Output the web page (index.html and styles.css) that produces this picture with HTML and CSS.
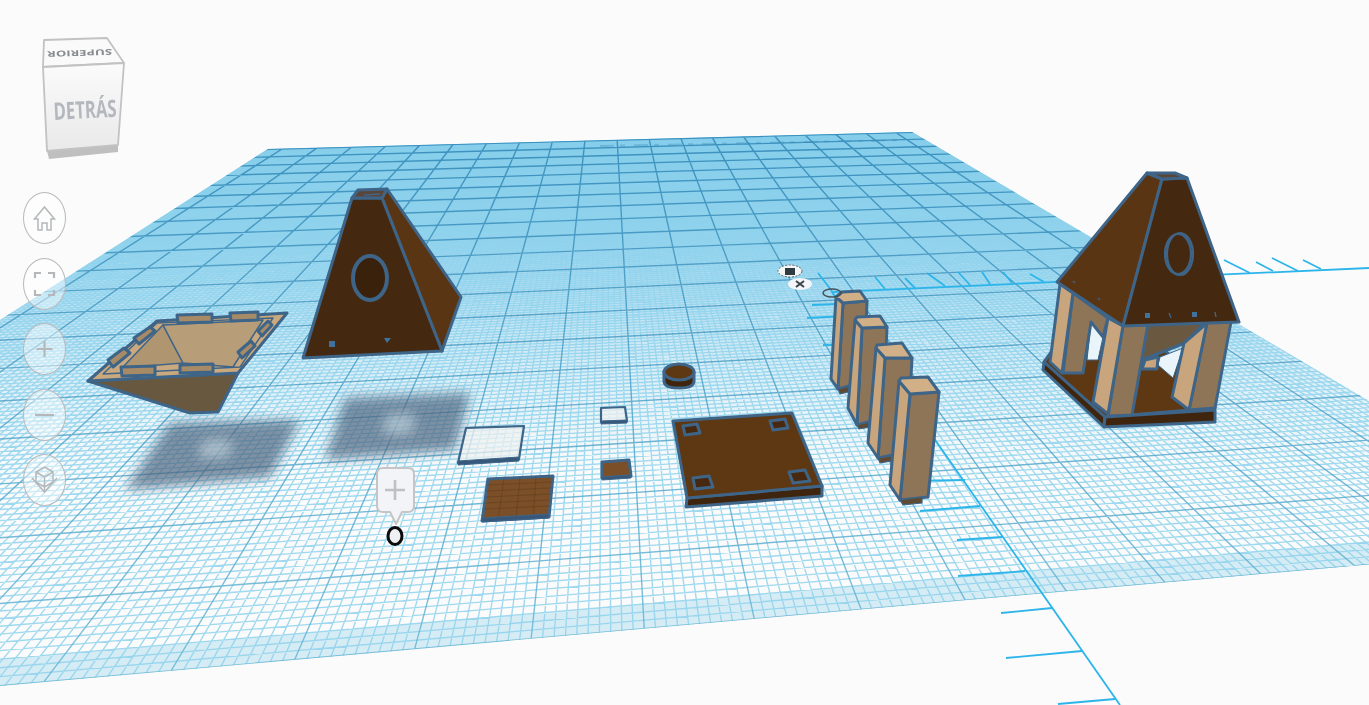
FILE: index.html
```html
<!DOCTYPE html>
<html lang="es">
<head>
<meta charset="utf-8">
<title>Tinkercad</title>
<link rel="stylesheet" href="styles.css">
</head>
<body>
<main class="editor">
<svg class="scene" viewBox="0 0 1369 705" width="1369" height="705" xmlns="http://www.w3.org/2000/svg">
  <defs>
    <linearGradient id="plateTint" gradientUnits="userSpaceOnUse" x1="0" y1="132" x2="0" y2="480">
      <stop offset="0" stop-color="#3fa9dd" stop-opacity=".9"/>
      <stop offset=".45" stop-color="#6fc2e9" stop-opacity=".5"/>
      <stop offset="1" stop-color="#a8def2" stop-opacity="0"/>
    </linearGradient>
    <linearGradient id="majorFade" gradientUnits="userSpaceOnUse" x1="0" y1="132" x2="0" y2="680">
      <stop offset="0" stop-color="#2f86b6"/>
      <stop offset=".45" stop-color="#4ea2c8"/>
      <stop offset="1" stop-color="#6ab8d6"/>
    </linearGradient>
    <linearGradient id="cubeFace" x1="0" y1="0" x2="0" y2="1">
      <stop offset="0" stop-color="#fbfbfb"/>
      <stop offset="1" stop-color="#e9e9e9"/>
    </linearGradient>
    <filter id="soft" x="-30%" y="-30%" width="160%" height="160%"><feGaussianBlur stdDeviation="6"/></filter>
    <clipPath id="plateClip"><path d="M268 149L912 132L1611 543L-666 745Z"/></clipPath>
  </defs>

  <!-- work plane: filled in by grid.js -->
  <g id="plate" clip-path="url(#plateClip)"></g>
  <path class="plate-smudge" d="M600 146L905 140"/>

  <!-- rulers -->
  <g class="ruler">
    <path d="M1120 705L832 292L1369 268"/>
    <path d="M1224 260L1250 273M1256 262L1273 271M1272 258L1298 271M1303 260L1321 269"/>
    <path d="M818 273L832 291M875 277L885 289M905 278L915 288M927 273L945 286M958 272L970 285M982 272L990 284M1003 272L1012 283M1030 274L1044 282"/>
    <path d="M812 305L838 304M807 318L847 316M823 345L857 344M910 481L965 480M920 511L980 506M957 540L1002 537M958 576L1025 571M1001 613L1052 608M1006 658L1082 651M1058 704L1115 699"/>
  </g>

  <!-- shadows of the floating shapes -->
  <g class="shadow" filter="url(#soft)">
    <path d="M170 423L300 420L270 477L125 490Z"/>
    <path d="M345 398L470 393L455 450L325 460Z"/>
    <path class="shadow-gap" d="M205 442L232 441L226 456L200 457Z"/>
    <path class="shadow-gap" d="M388 416L414 415L410 432L384 433Z"/>
  </g>

  <!-- tray -->
  <g class="edge">
    <path class="under" d="M88 381L238 373L218 412L190 413Z"/>
    <path class="rim" d="M88 381L157 321L287 313L238 373Z"/>
    <path class="inner-left" d="M122 368L163 325L183 363Z"/>
    <path class="inner-back" d="M163 325L263 320L233 367L183 363Z"/>
    <path class="thin" d="M103 374L157 323L273 318L240 367Z"/>
    <path class="tab" d="M177 315L212 314L212 322L178 323Z"/>
    <path class="tab" d="M230 313L258 312L258 320L231 321Z"/>
    <path class="tab" d="M134 338L150 327L155 331L139 344Z"/>
    <path class="tab" d="M108 360L124 348L130 353L113 367Z"/>
    <path class="tab" d="M258 331L268 321L272 325L262 336Z"/>
    <path class="tab" d="M238 352L251 341L255 346L242 358Z"/>
    <path class="tab" d="M121 367L155 366L155 375L122 376Z"/>
    <path class="tab" d="M180 365L213 364L213 372L180 373Z"/>
  </g>

  <!-- pyramid -->
  <g class="edge">
    <path class="roof-light" d="M387 189L461 297L442 351L382 198Z"/>
    <path class="roof-dark" d="M352 198L382 198L442 351L303 358Z"/>
    <path class="rim-dark" d="M352 198L358 190L387 189L382 198Z"/>
    <path class="thin" d="M364 195L380 194"/>
    <ellipse class="hole" cx="370" cy="278" rx="17" ry="22"/>
    <rect class="mark" x="329" y="341" width="6" height="6"/>
    <path class="mark" d="M384 338H391L387 343Z"/>
  </g>

  <!-- thin plates -->
  <g class="edge">
    <path class="sheet" d="M466 428L524 426L519 459L458 463Z"/>
    <path class="strip" d="M458 461L519 457L519 461L458 465Z"/>
    <path class="panel" d="M488 479L553 476L549 517L482 521Z"/>
    <path class="panel-lines" d="M487 485L552 482M486 491L551 488M486 497L551 494M485 503L550 500M484 509L550 506M504 479L498 520M520 478L516 519M536 477L533 518"/>
    <path class="strip" d="M482 518L549 514L549 518L482 522Z"/>
    <path class="sheet" d="M601 408L625 407L627 421L601 422Z"/>
    <path class="strip" d="M601 421L627 420L627 423L601 424Z"/>
    <path class="panel" d="M602 462L629 460L631 476L602 478Z"/>
    <path class="strip" d="M602 477L631 475L631 478L602 480Z"/>
  </g>

  <!-- disc -->
  <g class="edge">
    <path class="base-front" d="M664 372V381C664 386 671 388 679 388C687 388 694 386 694 381V372Z"/>
    <ellipse class="base-top" cx="679" cy="372" rx="15" ry="8"/>
  </g>

  <!-- base plate -->
  <g class="edge">
    <path class="base-front" d="M687 498L822 486L822 496L686 507Z"/>
    <path class="base-top" d="M673 421L792 413L822 486L687 498Z"/>
    <path class="slot" d="M683 426L697 424L700 433L685 435Z"/>
    <path class="slot" d="M770 421L785 419L788 428L773 430Z"/>
    <path class="slot" d="M693 478L709 476L713 487L695 489Z"/>
    <path class="slot" d="M789 472L805 470L810 481L793 483Z"/>
  </g>

  <!-- pillars -->
  <g class="edge">
    <path class="pillar-side" d="M843 303L867 301L864 382L838 389Z"/>
    <path class="pillar-front" d="M836 297L843 303L838 389L831 379Z"/>
    <path class="pillar-cap" d="M836 297L842 292L860 291L867 301L843 303Z"/>
    <path class="foot" d="M838 389L852 386V391L840 394Z"/>
    <path class="pillar-side" d="M862 328L887 327L883 418L857 425Z"/>
    <path class="pillar-front" d="M855 320L862 328L857 425L848 408Z"/>
    <path class="pillar-cap" d="M855 320L857 317L880 316L887 327L862 328Z"/>
    <path class="foot" d="M857 425L870 422V427L859 429Z"/>
    <path class="pillar-side" d="M885 358L912 358L907 452L878 458Z"/>
    <path class="pillar-front" d="M876 348L885 358L878 458L868 443Z"/>
    <path class="pillar-cap" d="M876 348L877 345L902 343L912 358L885 358Z"/>
    <path class="foot" d="M878 458L892 456V461L880 463Z"/>
    <path class="pillar-side" d="M910 394L939 392L928 497L900 500Z"/>
    <path class="pillar-front" d="M899 381L910 394L900 500L890 485Z"/>
    <path class="pillar-cap" d="M899 381L901 378L928 377L939 392L910 394Z"/>
    <path class="foot" d="M900 500L922 497V503L903 505Z"/>
  </g>

  <!-- gizmo near the origin -->
  <ellipse class="gizmo-ring" cx="790" cy="271" rx="12" ry="6"/>
  <rect class="gizmo-core" x="785" y="268" width="10" height="7"/>
  <ellipse class="gizmo-pad" cx="800" cy="284" rx="12" ry="6"/>
  <path class="gizmo-x" d="M796 281L804 287M804 281L796 287"/>
  <ellipse class="gizmo-small" cx="832" cy="293" rx="9" ry="4"/>

  <!-- house -->
  <g class="edge">
    <path class="base-top" d="M1044 362L1105 417L1215 408L1165 350L1060 340Z"/>
    <path class="hole-through" d="M1160 357L1183 348L1173 378L1158 365Z"/>
    <path class="pillar-under" d="M1145 325L1205 322L1185 343L1142 360Z"/>
    <path class="hole-through" d="M1091 322L1103 337L1098 360L1087 360Z"/>
    <path class="pillar-front" d="M1145 360L1158 357L1157 369L1142 369Z"/>
    <path class="pillar-side" d="M1073 293L1108 318L1103 337L1091 322L1083 373L1063 373Z"/>
    <path class="pillar-front" d="M1060 284L1073 293L1062 373L1050 362Z"/>
    <path class="base-front" d="M1044 362L1105 417L1104 427L1043 370Z"/>
    <path class="base-front" d="M1105 417L1215 410L1215 422L1104 427Z"/>
    <path class="pillar-side" d="M1123 324L1148 324L1132 415L1108 416Z"/>
    <path class="pillar-front" d="M1108 318L1123 326L1108 414L1093 402Z"/>
    <path class="pillar-side" d="M1207 322L1231 322L1215 408L1189 410Z"/>
    <path class="pillar-front" d="M1207 323L1189 410L1172 397L1184 343Z"/>
    <path class="roof-light" d="M1147 173L1162 179L1123 326L1057 282Z"/>
    <path class="roof-dark" d="M1162 179L1187 178L1239 322L1123 326Z"/>
    <path class="rim-dark" d="M1147 173L1175 173L1187 178L1162 179Z"/>
    <ellipse class="ring" cx="1180" cy="254" rx="13" ry="21"/>
    <ellipse class="ring" cx="1178" cy="254" rx="13" ry="20"/>
    <path class="mark" d="M1145 313H1150V318H1145ZM1192 312H1197V317H1192Z"/>
    <path class="thin" d="M1169 313L1171 318M1215 312L1216 317M1073 281L1075 283M1098 298L1100 300"/>
  </g>

  <!-- view cube -->
  <path class="cube-foot" d="M47 151L118 145L118 152L49 159Z"/>
  <path class="cube-top" d="M44 40L107 38L124 63L43 67Z"/>
  <path class="cube-front" d="M43 67L124 63L118 145L47 151Z"/>
  <text class="cube-word" x="54" y="120" textLength="63" lengthAdjust="spacingAndGlyphs" transform="rotate(-3 54 120)">DETRÁS</text>
  <text class="cube-word-small" x="112" y="49" textLength="65" lengthAdjust="spacingAndGlyphs" transform="rotate(178 112 49)">SUPERIOR</text>

  <!-- add-note pin -->
  <path class="pin" d="M383 468H408Q414 468 414 474V506Q414 512 408 512H402L396 524L390 512H383Q377 512 377 506V474Q377 468 383 468Z"/>
  <path class="pin-plus" d="M395 480V500M385 490H405"/>
  <ellipse class="pin-dot" cx="395" cy="536" rx="7" ry="8.5"/>
</svg>

<nav class="view-tools">
  <button class="view-btn" aria-label="Inicio">
    <svg viewBox="0 0 43 52" width="43" height="52"><path d="M11.5 27L21.5 15L31.5 27H28V38H24V31H19V38H15V27Z"/></svg>
  </button>
  <button class="view-btn" aria-label="Ajustar">
    <svg viewBox="0 0 43 52" width="43" height="52"><path class="heavy" d="M12 20V15H18M25 15H31V20M31 32V37H25M18 37H12V32"/></svg>
  </button>
  <button class="view-btn" aria-label="Acercar">
    <svg viewBox="0 0 43 52" width="43" height="52"><path class="heavy" d="M21.5 18V34M13.5 26H29.5"/></svg>
  </button>
  <button class="view-btn" aria-label="Alejar">
    <svg viewBox="0 0 43 52" width="43" height="52"><path class="heavy" d="M12 26H31"/></svg>
  </button>
  <button class="view-btn" aria-label="Proyección">
    <svg viewBox="0 0 43 52" width="43" height="52"><path d="M21.5 13L30 18V28L21.5 33L13 28V18ZM13 18L21.5 23L30 18M21.5 23V38M9 24L21.5 38L34 24"/></svg>
  </button>
</nav>
</main>
<script src="grid.js"></script>
</body>
</html>
```

FILE: styles.css
```css
html, body {
  margin: 0;
  height: 100%;
  overflow: hidden;
  background: #fbfbfb;
}
.editor {
  position: relative;
  width: 1369px;
  height: 705px;
  overflow: hidden;
  font-family: "Open Sans", "Liberation Sans", sans-serif;
}
.scene {
  position: absolute;
  inset: 0;
  display: block;
  filter: blur(0.7px);
}
.view-tools {
  position: absolute;
  left: 23px;
  top: 192px;
  display: flex;
  flex-direction: column;
  gap: 13.5px;
}
.view-btn {
  width: 43px;
  height: 52px;
  padding: 0;
  border: 1.5px solid #b9b9b9;
  border-radius: 50%;
  background: rgba(255, 255, 255, 0.45);
  display: flex;
  align-items: center;
  justify-content: center;
}
.view-btn svg { display: block; flex: none; }
.view-btn path { fill: none; stroke: #b4b8ba; stroke-width: 1.5; }
.view-btn path.heavy { stroke-width: 2.2; }

.plate-tint { fill: url(#plateTint); }
.plate-band { fill: #5cbde0; fill-opacity: 0.24; }
.plate-minor { fill: none; stroke: #8ed2ec; stroke-width: 1.35; stroke-opacity: 0.85; }
.plate-major { fill: none; stroke: url(#majorFade); stroke-width: 1.4; stroke-opacity: 0.85; }
.plate-smudge { fill: none; stroke: #3d8db8; stroke-width: 2; stroke-opacity: 0.35; stroke-dasharray: 14 6 5 9; }

.ruler path { fill: none; stroke: #2db5ea; stroke-width: 1.8; }
.shadow path { fill: #47607a; fill-opacity: 0.68; }
.shadow .shadow-gap { fill: #d6e6ee; fill-opacity: 0.55; }

.edge path, .edge ellipse { stroke: #3e6588; stroke-width: 3; stroke-linejoin: round; }
.edge .thin { stroke-width: 1.4; fill: none; }
.under { fill: #695840; }
.rim { fill: #cba97e; }
.edge .inner-left { fill: #b09670; stroke-width: 1.5; }
.edge .inner-back { fill: #b89d79; stroke-width: 1.5; }
.tab { fill: #a78a66; }
.roof-dark { fill: #452810; }
.roof-light { fill: #5a3513; }
.rim-dark { fill: #5a4638; }
.hole { fill: #3a210c; stroke-width: 4 !important; }
.ring { fill: none; stroke-width: 2.2 !important; }
.edge .mark { fill: #41729b; stroke: none; }
.edge .sheet { fill: #f0f1f0; fill-opacity: 0.72; stroke-width: 2.2; }
.panel { fill: #7b4f28; }
.edge .panel-lines { fill: none; stroke: #4d3116; stroke-width: 0.6; stroke-opacity: 0.55; }
.strip { fill: #37587a; stroke-width: 1 !important; }
.base-top { fill: #5e3713; }
.base-front { fill: #3f250d; }
.slot { fill: #48290f; }
.pillar-side { fill: #8f7558; }
.pillar-front { fill: #c8a57c; }
.pillar-cap { fill: #d1b088; }
.pillar-under { fill: #6b5840; }
.hole-through { fill: #e9f5fb; stroke-width: 1 !important; }
.foot { fill: #5f4a34; stroke-width: 1.2 !important; }

.gizmo-ring { fill: #f4f6f6; stroke: #5a5f63; stroke-width: 1; stroke-dasharray: 2 1.5; }
.gizmo-core { fill: #2f3a42; }
.gizmo-pad { fill: #f2f6f8; }
.gizmo-x { fill: none; stroke: #3b4248; stroke-width: 2; }
.gizmo-small { fill: none; stroke: #46525a; stroke-width: 1.5; }

.cube-foot { fill: #bfbfbf; }
.cube-top { fill: #fafafa; stroke: #c2c2c2; stroke-width: 1.8; stroke-linejoin: round; }
.cube-front { fill: url(#cubeFace); stroke: #c2c2c2; stroke-width: 1.8; stroke-linejoin: round; }
.cube-word { font-family: "Open Sans", "Liberation Sans", sans-serif; font-size: 24px; font-weight: 700; fill: #b4b8be; }
.cube-word-small { font-family: "Open Sans", "Liberation Sans", sans-serif; font-size: 8px; font-weight: 700; fill: #888b90; }

.pin { fill: #f3f4f8; stroke: #c5c5c5; stroke-width: 2; stroke-linejoin: round; }
.pin-plus { fill: none; stroke: #bfc0c2; stroke-width: 2.6; }
.pin-dot { fill: #eef0f2; stroke: #0c0c0c; stroke-width: 3; }
```

FILE: grid.js
```js
(function () {
  var NS = "http://www.w3.org/2000/svg";
  var plate = document.getElementById("plate");
  // the ruled lines sit a little to the right of the plate's silhouette
  var q = [[282, 149], [926, 132], [1621, 542], [-656, 744]];

  var dx1 = q[1][0] - q[2][0], dx2 = q[3][0] - q[2][0], sx = q[0][0] - q[1][0] + q[2][0] - q[3][0];
  var dy1 = q[1][1] - q[2][1], dy2 = q[3][1] - q[2][1], sy = q[0][1] - q[1][1] + q[2][1] - q[3][1];
  var det = dx1 * dy2 - dx2 * dy1;
  var g = (sx * dy2 - dx2 * sy) / det, h = (dx1 * sy - sx * dy1) / det;
  var a = q[1][0] - q[0][0] + g * q[1][0], b = q[3][0] - q[0][0] + h * q[3][0], c = q[0][0];
  var d = q[1][1] - q[0][1] + g * q[1][1], e = q[3][1] - q[0][1] + h * q[3][1], f = q[0][1];

  function pt(u, v) {
    var w = g * u + h * v + 1;
    return ((a * u + b * v + c) / w).toFixed(1) + " " + ((d * u + e * v + f) / w).toFixed(1);
  }
  function add(cls, dAttr) {
    var p = document.createElementNS(NS, "path");
    p.setAttribute("class", cls);
    p.setAttribute("d", dAttr);
    plate.appendChild(p);
  }
  function quad(u0, v0, u1, v1) {
    return "M" + pt(u0, v0) + "L" + pt(u1, v0) + "L" + pt(u1, v1) + "L" + pt(u0, v1) + "Z";
  }

  add("plate-tint", quad(-0.05, -0.01, 1.05, 1.01));
  add("plate-band", quad(-0.05, 0.985, 1.05, 1.01));

  var minor = "", major = "", n = 200, i;
  for (i = -10; i <= n + 10; i++) {
    var t = i / n;
    var seg = "M" + pt(t, -0.01) + "L" + pt(t, 1.01);
    if (i >= 0 && i <= n) seg += "M" + pt(-0.05, t) + "L" + pt(1.05, t);
    if (i % 10 === 0) major += seg; else minor += seg;
  }
  add("plate-minor", minor);
  add("plate-major", major);
})();
```
